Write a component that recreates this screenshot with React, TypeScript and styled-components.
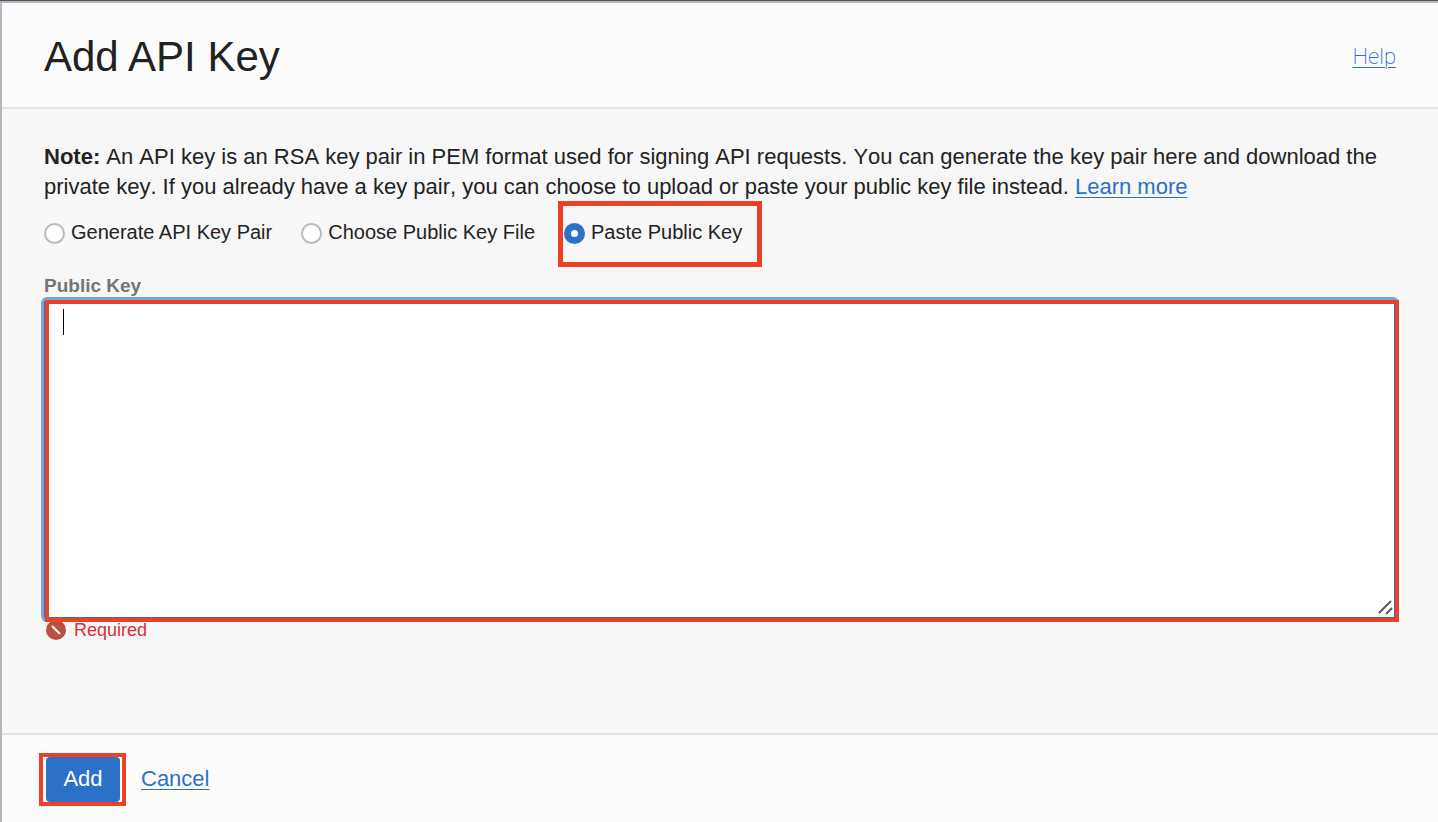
import React, { useState } from "react";
import styled, { createGlobalStyle, css } from "styled-components";

const GlobalStyle = createGlobalStyle`
  *, *::before, *::after { box-sizing: border-box; }
  body {
    margin: 0;
    background: #f7f7f7;
    color: #222222;
    font-family: "Helvetica Neue", "Liberation Sans", Arial, sans-serif;
    font-size: 22px;
    line-height: 30px;
  }
`;

const Panel = styled.main`
  display: flex;
  flex-direction: column;
  min-height: 100vh;
  border-top: 1px solid #58565a;
`;

const Frame = styled.div`
  display: flex;
  flex: 1;
  flex-direction: column;
  border-top: 2px solid #b4b6c0;
  border-left: 2px solid #b4b6c0;
`;

const Header = styled.header`
  display: flex;
  align-items: center;
  justify-content: space-between;
  padding: 29px 42px 25px;
  border-bottom: 2px solid #e4e4e4;
  background: #fcfcfc;
`;

const Title = styled.h1`
  margin: 0;
  font-size: 42px;
  font-weight: 400;
  line-height: 50px;
`;

const Link = styled.a<{ $thin?: boolean }>`
  color: #2c70c8;
  text-decoration: underline;
  text-decoration-thickness: 1px;
  text-underline-offset: 3px;
  ${(p) =>
    p.$thin &&
    css`
      font-family: "Helvetica Neue", Roboto, sans-serif;
      font-weight: 200;
    `}
`;

const Body = styled.form`
  display: flex;
  flex: 1;
  flex-direction: column;
  padding: 33px 42px 0;
`;

const Note = styled.p`
  margin: 0;
  font-kerning: none;
`;

const Choices = styled.div`
  display: flex;
  gap: 29px;
  margin-top: 15px;
`;

const Choice = styled.label<{ $marked?: boolean }>`
  position: relative;
  display: flex;
  align-items: center;
  gap: 6px;
  font-size: 20px;
  line-height: 30px;
  ${(p) =>
    p.$marked &&
    css`
      &::after {
        content: "";
        position: absolute;
        inset: -16px -20px -20px -6px;
        border: 5px solid #ee4027;
        pointer-events: none;
      }
    `}
`;

const Radio = styled.input`
  appearance: none;
  width: 21px;
  height: 21px;
  margin: 2px 0 0;
  border: 2px solid #b5bac3;
  border-radius: 50%;
  background: #ffffff;
  &:checked {
    border: 7px solid #2c70c8;
  }
`;

const FieldLabel = styled.label`
  margin-top: 25px;
  color: #757575;
  font-size: 19px;
  font-weight: 700;
  line-height: 28px;
`;

const KeyField = styled.div`
  position: relative;
  display: flex;
  &::after {
    content: "";
    position: absolute;
    inset: 0 -3px -3px 1px;
    border: 4px solid #ee4027;
    pointer-events: none;
  }
`;

const KeyInput = styled.textarea`
  flex: 1;
  height: 319px;
  padding: 8px 17px;
  border: 2px solid #2c70c8;
  border-radius: 3px;
  outline: none;
  box-shadow: 0 0 0 3px #7ca4dc;
  background: #ffffff;
  color: #222222;
  font: inherit;
  resize: none;
`;

const Caret = styled.span`
  position: absolute;
  top: 9px;
  left: 19px;
  width: 1px;
  height: 26px;
  background: #000000;
`;

const Grip = styled.svg`
  position: absolute;
  right: 3px;
  bottom: 4px;
`;

const ErrorLine = styled.p`
  display: flex;
  align-items: center;
  gap: 8px;
  margin: 0 0 0 2px;
  color: #d63034;
  font-size: 18px;
  line-height: 22px;
`;

const Footer = styled.footer`
  display: flex;
  align-items: baseline;
  gap: 15px;
  padding: 18px 37px 16px;
  border-top: 2px solid #e4e4e4;
  background: #fcfcfc;
`;

const ButtonMark = styled.div`
  display: flex;
  padding: 0 2px 0 3px;
  border: 4px solid #ee4027;
  background: #ffffff;
`;

const AddButton = styled.button`
  width: 74px;
  height: 45px;
  padding: 0 0 2px;
  border: 0;
  border-radius: 4px;
  background: #2c70c8;
  color: #ffffff;
  font: inherit;
`;

const choices = ["Generate API Key Pair", "Choose Public Key File", "Paste Public Key"];

export default function App() {
  const [choice, setChoice] = useState(choices[2]);
  const [key, setKey] = useState("");

  return (
    <Panel>
      <GlobalStyle />
      <Frame>
        <Header>
          <Title>Add API Key</Title>
          <Link $thin href="#help">Help</Link>
        </Header>
        <Body id="key-form" onSubmit={(e) => e.preventDefault()}>
          <Note>
            <strong>Note:</strong> An API key is an RSA key pair in PEM format used for signing API
            requests. You can generate the key pair here and download the private key. If you
            already have a key pair, you can choose to upload or paste your public key file instead.{" "}
            <Link href="#learn-more">Learn more</Link>
          </Note>
          <Choices role="radiogroup" aria-label="Key source">
            {choices.map((name) => (
              <Choice key={name} $marked={name === choices[2]}>
                <Radio
                  type="radio"
                  name="source"
                  checked={choice === name}
                  onChange={() => setChoice(name)}
                />
                {name}
              </Choice>
            ))}
          </Choices>
          <FieldLabel htmlFor="public-key">Public Key</FieldLabel>
          <KeyField>
            <KeyInput
              id="public-key"
              value={key}
              onChange={(e) => setKey(e.target.value)}
              aria-describedby="key-error"
            />
            {key === "" && <Caret aria-hidden="true" />}
            <Grip width="16" height="16" viewBox="0 0 16 16" aria-hidden="true">
              <path d="M2 14 14 2M9 15l6-6" stroke="#5c5c5c" strokeWidth="2" fill="none" />
            </Grip>
          </KeyField>
          <ErrorLine id="key-error">
            <svg width="20" height="20" viewBox="0 0 20 20" aria-hidden="true">
              <circle cx="10" cy="10" r="10" fill="#bb4f3f" />
              <path d="m6 6 8 8" stroke="#ffffff" strokeWidth="2" />
            </svg>
            Required
          </ErrorLine>
        </Body>
        <Footer>
          <ButtonMark>
            <AddButton type="submit" form="key-form">Add</AddButton>
          </ButtonMark>
          <Link href="#cancel">Cancel</Link>
        </Footer>
      </Frame>
    </Panel>
  );
}
